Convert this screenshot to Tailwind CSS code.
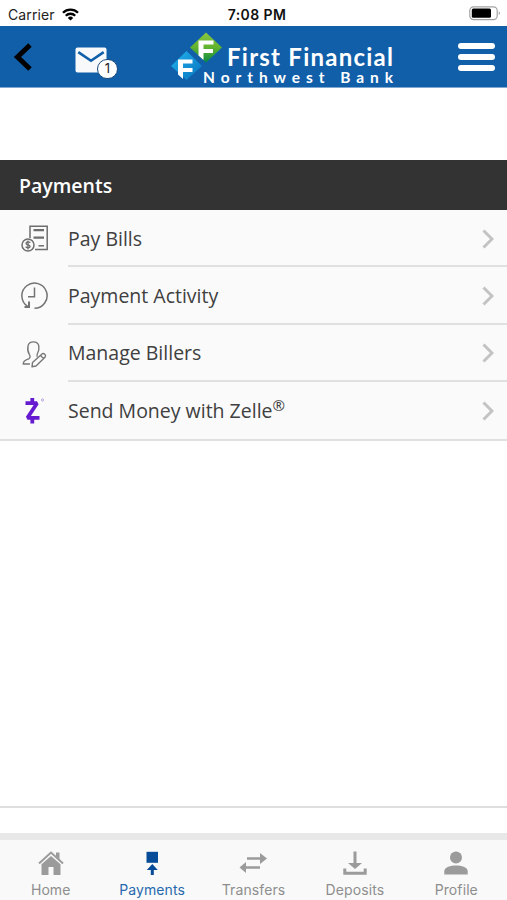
<!DOCTYPE html>
<html lang="en">
<head>
  <meta charset="UTF-8">
  <meta name="viewport" content="width=device-width, initial-scale=1.0">
  <title>Payments</title>
  <script src="https://cdn.jsdelivr.net/npm/@tailwindcss/browser@4"></script>
</head>
<body class="bg-white font-['Open_Sans',sans-serif]">
  <div class="flex flex-col w-[507px] h-[900px] overflow-hidden">

    <!-- Status bar -->
    <div class="grid grid-cols-3 items-center h-[26px] shrink-0 pt-[2px] font-['Inter',sans-serif] text-[14px]">
      <div class="flex items-center gap-[7px] pl-2">
        <span class="tracking-[0.1px] text-[#222]">Carrier</span>
        <svg class="w-[17px] h-[13px]" viewBox="0 0 17 13" fill="none" stroke="#000" stroke-width="2.3">
          <path d="M1 4.8a10.6 10.6 0 0 1 15 0M3.8 7.7a6.7 6.7 0 0 1 9.4 0"/>
          <path d="M8.5 12.6 5.8 9.9a3.9 3.9 0 0 1 5.4 0z" fill="#000" stroke="none"/>
        </svg>
      </div>
      <div class="flex justify-center pl-[7px] font-semibold tracking-[0.4px] text-[#111]">7:08 PM</div>
      <div class="flex justify-end pr-[6px]">
        <svg class="w-8 h-[15px] mb-[2px]" viewBox="0 0 32 15">
          <rect x=".8" y=".8" width="27.4" height="12.8" rx="3.8" fill="#fff" stroke="#a3a3a3" stroke-width="1.2"/>
          <rect x="2.8" y="2.6" width="19.2" height="9.2" rx="1.5" fill="#000"/>
          <path d="M29.8 5.2q2 1.8 0 3.8z" fill="#888"/>
        </svg>
      </div>
    </div>

    <!-- Header -->
    <header class="flex items-center h-[62px] shrink-0 bg-[#115fa9] border-b border-[#7ea8d0]">
      <svg class="w-[20px] h-[28px] ml-[13px] mt-[1px]" viewBox="0 0 20 28" fill="none" stroke="#000" stroke-width="5"><path d="M17 2 4.5 14 17 26"/></svg>
      <div class="relative w-[44px] h-[36px] ml-[42px] mt-[15px]">
        <svg class="w-[32px] h-[27px]" viewBox="0 0 32 27">
          <rect x=".5" y="1.5" width="31" height="25" rx="2" fill="#f7f9fb"/>
          <path d="M3.3 6.2 16 14.8 28.7 6.2" fill="none" stroke="#115fa9" stroke-width="2.6"/>
        </svg>
        <span class="absolute left-[22px] top-[13px] flex items-center justify-center w-[21px] h-[20px] rounded-full bg-white border border-[#174a7c] font-['Inter',sans-serif] text-[13px] text-[#222]">1</span>
      </div>
      <svg class="w-[226px] h-[56px] ml-[51px] mt-[3px]" viewBox="170 30 226 56">
        <defs>
          <linearGradient id="green" x1="0" y1="0" x2="0" y2="1"><stop offset="0" stop-color="#8ac63f"/><stop offset=".5" stop-color="#62b32e"/><stop offset="1" stop-color="#078844"/></linearGradient>
          <linearGradient id="cyan" x1="0" y1="0" x2="1" y2="1"><stop offset="0" stop-color="#22b5ee"/><stop offset=".5" stop-color="#1592d6"/><stop offset="1" stop-color="#0875bd"/></linearGradient>
        </defs>
        <path d="M206 32.500 222 47.500 206 62.500 190 47.500z" fill="url(#green)"/>
        <path d="M186.500 51 202 66 186.500 80 171 66z" fill="url(#cyan)"/>
        <path d="M198.500 40.500h15v4h-10v4.500h9.500v4h-9.500v7l-5-4.500z" fill="#fff"/>
        <path d="M178 59.500h14.500v4H183v4.500h9.500v4H183v7l-5-4.500z" fill="#fff"/>
        <text x="227" y="65.500" font-family="Lato, sans-serif" font-size="24" font-weight="700" fill="#fff" textLength="166">First Financial</text>
        <text x="203" y="82.500" font-family="Lato, sans-serif" font-size="15.500" font-weight="700" fill="#fff" textLength="190" lengthAdjust="spacing">Northwest Bank</text>
      </svg>
      <div class="flex flex-col gap-[5px] w-[37px] ml-auto mr-3 mt-px">
        <span class="h-[6px] rounded-full bg-white"></span>
        <span class="h-[6px] rounded-full bg-white"></span>
        <span class="h-[6px] rounded-full bg-white"></span>
      </div>
    </header>

    <main class="flex flex-col flex-1 pt-[72px]">
      <h1 class="flex items-center h-[50px] pl-[19px] pt-[2px] bg-[#333] text-white text-[19.5px] font-semibold">Payments</h1>

      <ul class="bg-[#fafafa] border-b-2 border-[#e0e0e0] text-[#404040] text-[19.5px]">
        <li class="flex h-[57.3px]">
          <div class="w-[68px] pl-5 pt-[14px]">
            <svg class="w-[30px] h-[30px]" viewBox="0 0 30 30" fill="none" stroke="#6e6e6e" stroke-width="1.5">
              <path d="M10 14V2.300h17.200v23.200H15"/>
              <path d="M13.500 6.200H24M13.500 13.700H24" stroke-width="2.300"/><path d="M18.500 21.800H24"/>
              <circle cx="8" cy="21" r="6" fill="#fafafa"/>
              <path d="M10.300 18.600q-2.300-1.500-4 0c-1.400 2.800 4.500 1.800 3.700 4.300q-1.700 1.500-4.400 0M8 16.500v9" stroke-width="1.300"/>
            </svg>
          </div>
          <div class="flex flex-1 items-center justify-between border-b-2 border-[#e0e0e0] pr-[13px] pt-[2px]">
            <span>Pay Bills</span>
            <svg class="w-[12px] h-[20px]" viewBox="0 0 12 20" fill="none" stroke="#c3c3c3" stroke-width="3"><path d="m1.500 1.500 8.500 8.500-8.500 8.500"/></svg>
          </div>
        </li>
        <li class="flex h-[57.3px]">
          <div class="w-[68px] pl-5 pt-[14px]">
            <svg class="w-[30px] h-[30px]" viewBox="0 0 30 30" fill="none" stroke="#737373" stroke-width="1.5">
              <path d="M7.500 25.200A12.600 12.600 0 1 1 14.500 27.300"/>
              <path d="M14.500 6.500v9.200H8"/><path d="M4.500 26H9v-5.500" stroke-width="2"/>
            </svg>
          </div>
          <div class="flex flex-1 items-center justify-between border-b-2 border-[#e0e0e0] pr-[13px] pt-[2px]">
            <span>Payment Activity</span>
            <svg class="w-[12px] h-[20px]" viewBox="0 0 12 20" fill="none" stroke="#c3c3c3" stroke-width="3"><path d="m1.500 1.500 8.500 8.500-8.500 8.500"/></svg>
          </div>
        </li>
        <li class="flex h-[57.3px]">
          <div class="w-[68px] pl-5 pt-[14px]">
            <svg class="w-[30px] h-[30px]" viewBox="0 0 30 30" fill="none" stroke="#777" stroke-width="1.400" stroke-linejoin="round">
              <path d="M10 25H3.200c.3-4 2.500-4 5.500-5.200 1.800-1 1.700-3 .6-4.500C7.500 12.500 7.500 10 8 7c.8-5.500 10-5.500 10.800 0 .5 3.500.2 5-1.300 7.500-.9 1.500-.8 2.500-.2 3.300"/>
              <path d="m12.500 23.500 9.500-8.500c1.700-1.300 4.500 1 3.200 2.900L16 27l-4 .8zM20.500 16.500l3 3"/>
            </svg>
          </div>
          <div class="flex flex-1 items-center justify-between border-b-2 border-[#e0e0e0] pr-[13px] pt-px">
            <span>Manage Billers</span>
            <svg class="w-[12px] h-[20px]" viewBox="0 0 12 20" fill="none" stroke="#c3c3c3" stroke-width="3"><path d="m1.500 1.500 8.500 8.500-8.500 8.500"/></svg>
          </div>
        </li>
        <li class="flex h-[57.3px]">
          <div class="w-[68px] pl-5 pt-[14px]">
            <svg class="w-[30px] h-[30px]" viewBox="0 0 30 30" fill="none" stroke="#671bd0" stroke-width="3.800">
              <path d="M5.500 7.200H17L7.500 21.800H19.500" stroke-linejoin="miter" stroke-miterlimit="2"/><path d="M12.300 2v5M12.300 22v5.500"/>
              <circle cx="22.500" cy="4" r="1.100" stroke="#b9a5dc" stroke-width="1"/>
            </svg>
          </div>
          <div class="flex flex-1 items-center justify-between pr-[13px]">
            <span>Send Money with Zelle<sup class="text-[15px] -top-[7px]">®</sup></span>
            <svg class="w-[12px] h-[20px]" viewBox="0 0 12 20" fill="none" stroke="#c3c3c3" stroke-width="3"><path d="m1.500 1.500 8.500 8.500-8.500 8.500"/></svg>
          </div>
        </li>
      </ul>
      <div class="mt-auto mb-[25px] h-[2px] bg-[#dedede]"></div>
    </main>

    <!-- Tab bar -->
    <nav class="grid grid-cols-5 h-[67px] shrink-0 border-t-[7px] border-[#e8e8e8] bg-[#f9f9f9] font-['Inter',sans-serif] text-[14px] leading-5 tracking-[0.1px] text-[#8e8e8e]">
      <a class="flex flex-col items-center pt-[9px]">
        <svg class="w-[28px] h-[28px]" viewBox="0 0 28 28" fill="#9b9b9b"><path d="M14 7 4.500 15.200V26h7v-8h5v8h7V15.200z"/><path d="m2 14.500 12-11 12 11" fill="none" stroke="#9b9b9b" stroke-width="2"/><path d="M19 3.500h3.500v7L19 7.500z"/></svg>
        <span class="pt-[3px]">Home</span>
      </a>
      <a class="flex flex-col items-center pt-[9px]">
        <svg class="w-[28px] h-[28px]" viewBox="0 0 28 28" fill="#074c98"><path d="M8.500 2.800h11.500v11H8.500z"/><path d="m14.300 15 5.500 6h-4v5h-3v-5h-4z"/></svg>
        <span class="pt-[3px] text-[#2869ae]">Payments</span>
      </a>
      <a class="flex flex-col items-center pt-[9px]">
        <svg class="w-[28px] h-[28px]" viewBox="0 0 28 28" fill="none" stroke="#9b9b9b" stroke-width="2.400"><path d="M8 9.500h15M5 18.500h16"/><path d="m21 4 7 5.500-7 5.500zM7 13l-6.500 5.500L7 24z" fill="#9b9b9b" stroke="none"/></svg>
        <span class="pt-[3px]">Transfers</span>
      </a>
      <a class="flex flex-col items-center pt-[9px]">
        <svg class="w-[28px] h-[28px]" viewBox="0 0 28 28" fill="none" stroke="#9b9b9b" stroke-width="3"><path d="M2.300 19.500h3v3.300h17.400v-3.300h3v6.300H2.300z" fill="#9b9b9b" stroke="none"/><path d="M14 2.500v13"/><path d="M7 14h14l-7 6z" fill="#9b9b9b" stroke="none"/></svg>
        <span class="pt-[3px]">Deposits</span>
      </a>
      <a class="flex flex-col items-center pt-[9px]">
        <svg class="w-[28px] h-[28px]" viewBox="0 0 28 28" fill="#9b9b9b"><circle cx="14" cy="8.500" r="6"/><path d="M2.300 25.500v-3.700c1-7 22.400-7 23.400 0v3.700z"/></svg>
        <span class="pt-[3px]">Profile</span>
      </a>
    </nav>
  </div>
</body>
</html>
